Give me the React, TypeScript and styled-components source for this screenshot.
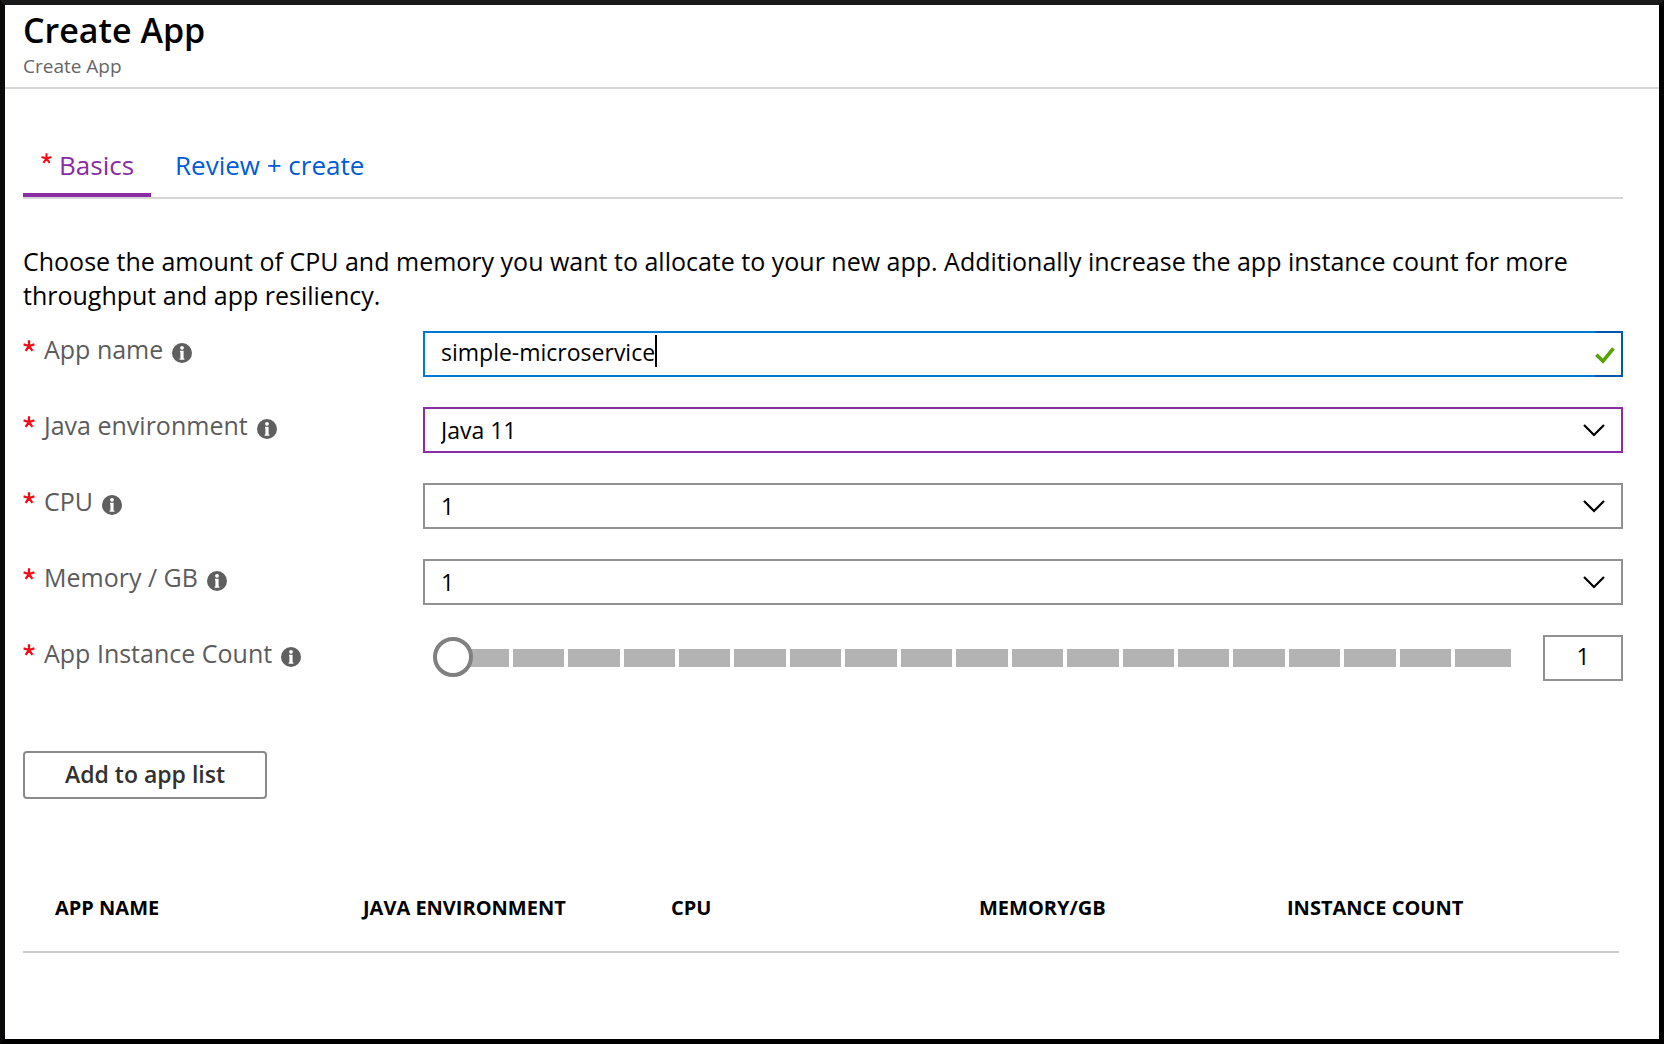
import React, { useState } from "react";
import styled, { createGlobalStyle } from "styled-components";

const GlobalStyle = createGlobalStyle`
  *, *::before, *::after { box-sizing: border-box; }
  body { margin: 0; background: #fff; }
  body, button, input, select { font-family: "Open Sans", "Noto Sans", sans-serif; }
`;

const Blade = styled.main`
  display: flex;
  flex-direction: column;
  min-height: 100vh;
  border: 5px solid #000;
  border-top-color: #1a1a1a;
  border-left-color: #0c0a09;
  background: #fff;
  color: #000;
`;

const Header = styled.header`
  padding: 5px 18px 8px;
  border-bottom: 2px solid #d6d6d6;
`;

const Title = styled.h1`
  margin: 0;
  font-size: 34px;
  line-height: 40px;
  font-weight: 600;
`;

const Subtitle = styled.p`
  margin: 3px 0 0;
  font-size: 19px;
  line-height: 26px;
  color: #666;
`;

const Body = styled.div`
  padding: 58px 36px 0 18px;
`;

const Tabs = styled.nav`
  display: flex;
  gap: 4px;
  border-bottom: 2px solid #d6d6d6;
`;

const Tab = styled.button<{ $active?: boolean }>`
  display: flex;
  gap: 7px;
  padding: 0 ${(p) => (p.$active ? 17 : 20)}px 10px ${(p) => (p.$active ? 18 : 20)}px;
  border: 0;
  border-bottom: 4px solid ${(p) => (p.$active ? "#8a2da5" : "transparent")};
  background: none;
  font-size: 26px;
  line-height: 36px;
  color: ${(p) => (p.$active ? "#8a2da5" : "#015cda")};
  cursor: pointer;
`;

const Star = styled.svg<{ $size: number; $top: number }>`
  flex: none;
  width: ${(p) => p.$size}px;
  height: ${(p) => p.$size}px;
  margin-top: ${(p) => p.$top}px;
  stroke: #f40c16;
  stroke-width: 2.3;
  fill: none;
`;

const Intro = styled.p`
  margin: 45px 0 19px;
  font-size: 25px;
  line-height: 34px;
`;

const Form = styled.form`
  display: flex;
  flex-direction: column;
  gap: 30px;
`;

const Row = styled.div`
  display: grid;
  grid-template-columns: 400px minmax(0, 1fr);
  align-items: start;
`;

const Label = styled.label`
  display: flex;
  gap: 9px;
  font-size: 25px;
  line-height: 36px;
  color: #5c5c5c;
`;

const InfoMark = styled.svg`
  flex: none;
  width: 20px;
  height: 20px;
  margin-top: 12px;
`;

const TextBox = styled.div`
  display: flex;
  align-items: stretch;
  height: 46px;
  border: 2px solid #0078d4;
  padding-left: 16px;
  cursor: text;
`;

const NameInput = styled.input`
  field-sizing: content;
  min-width: 0;
  border: 0;
  outline: 0;
  padding: 0 0 4px;
  background: none;
  font-size: 23px;
  color: #000;
`;

const Caret = styled.span`
  width: 2px;
  height: 32px;
  margin-top: 2px;
  background: #000;
`;

const Valid = styled.span`
  display: flex;
  align-items: center;
  width: 28px;
  margin: -2px -2px -2px auto;
  padding-top: 2px;
  border: 2px solid #0058ad;
  border-left: 0;
`;

const SelectBox = styled.div`
  display: grid;
  grid-template-columns: minmax(0, 1fr) 22px 18px;
  align-items: center;
`;

const Select = styled.select<{ $changed?: boolean }>`
  grid-area: 1 / 1 / 2 / 4;
  appearance: none;
  width: 100%;
  height: 46px;
  padding: 0 40px 0 16px;
  border: 2px solid ${(p) => (p.$changed ? "#8a2da5" : "#919191")};
  border-radius: 0;
  background: #fff;
  font-size: 23px;
  color: #000;
`;

const Chevron = styled.svg`
  grid-area: 1 / 2;
  width: 22px;
  height: 13px;
  pointer-events: none;
`;

const CountBox = styled.div`
  display: grid;
  grid-template-columns: minmax(0, 1fr) 80px;
  column-gap: 32px;
  align-items: center;
  padding-left: 10px;
`;

const Track = styled.div`
  grid-area: 1 / 1;
  display: flex;
  gap: 4px;
  padding-left: 20px;
`;

const Segment = styled.span`
  flex: 12;
  height: 18px;
  background: #b3b3b3;

  &:first-child, &:last-child { flex-grow: 13; }
`;

const Slider = styled.input`
  grid-area: 1 / 1;
  appearance: none;
  width: 100%;
  height: 40px;
  margin: 0 0 2px;
  background: none;
  z-index: 1;

  &::-webkit-slider-thumb {
    appearance: none;
    width: 40px;
    height: 40px;
    border: 4px solid #808080;
    border-radius: 50%;
    background: #fff;
  }
`;

const CountInput = styled.input`
  grid-area: 1 / 2;
  width: 80px;
  height: 46px;
  padding: 0 0 4px;
  border: 2px solid #919191;
  font-size: 23px;
  text-align: center;
  color: #000;
`;

const AddButton = styled.button`
  align-self: flex-start;
  height: 48px;
  margin-top: 40px;
  padding: 0 40px 2px;
  border: 2px solid #8a8a8a;
  border-radius: 4px;
  background: #fff;
  font-size: 23px;
  font-weight: 600;
  color: #323130;
  cursor: pointer;
`;

const TableWrap = styled.section`
  margin: 64px 4px 0 0;
  padding: 0 32px 0 24px;
  border-bottom: 2px solid #ccc;
`;

const Table = styled.table`
  width: 100%;
  table-layout: fixed;
  border-collapse: collapse;

  th {
    padding: 31px 8px 29px;
    font-size: 20px;
    line-height: 28px;
    font-weight: 700;
    text-align: left;
  }
`;

function RequiredStar({ size, top }: { size: number; top: number }) {
  return (
    <Star viewBox="0 0 12 12" $size={size} $top={top} aria-hidden="true">
      <path d="M6 0.3V6M6 6L0.6 4.4M6 6l5.4-1.6M6 6L2.6 10.8M6 6l3.4 4.8" />
    </Star>
  );
}

function Info() {
  return (
    <InfoMark viewBox="0 0 20 20" aria-hidden="true">
      <circle cx="10" cy="10" r="10" fill="#5f5f5f" />
      <circle cx="10" cy="4.8" r="1.9" fill="#fff" />
      <path d="M8 7.8H11.6V15.4H12.4V16.8H7.6V15.4H8.4V9.2H8z" fill="#fff" />
    </InfoMark>
  );
}

function FieldLabel({ id, text }: { id: string; text: string }) {
  return (
    <Label htmlFor={id}>
      <RequiredStar size={12} top={9} />
      {text}
      <Info />
    </Label>
  );
}

interface PickProps {
  id: string;
  label: string;
  options: string[];
  initial: string;
  changed?: boolean;
}

function Pick({ id, label, options, initial, changed }: PickProps) {
  return (
    <Row>
      <FieldLabel id={id} text={label} />
      <SelectBox>
        <Select id={id} defaultValue={initial} $changed={changed}>
          {options.map((o) => (
            <option key={o}>{o}</option>
          ))}
        </Select>
        <Chevron viewBox="0 0 22 13" aria-hidden="true">
          <path d="M1 1l10 10L21 1" fill="none" stroke="#000" strokeWidth="2.2" />
        </Chevron>
      </SelectBox>
    </Row>
  );
}

const MAX_INSTANCES = 20;
const COLUMNS = ["APP NAME", "JAVA ENVIRONMENT", "CPU", "MEMORY/GB", "INSTANCE COUNT"];

export default function App() {
  const [name, setName] = useState("simple-microservice");
  const [count, setCount] = useState(1);

  return (
    <>
      <GlobalStyle />
      <Blade>
        <Header>
          <Title>Create App</Title>
          <Subtitle>Create App</Subtitle>
        </Header>
        <Body>
          <Tabs>
            <Tab type="button" $active>
              <RequiredStar size={11} top={6} />
              Basics
            </Tab>
            <Tab type="button">Review + create</Tab>
          </Tabs>
          <Intro>
            Choose the amount of CPU and memory you want to allocate to your new app. Additionally
            increase the app instance count for more throughput and app resiliency.
          </Intro>
          <Form onSubmit={(e) => e.preventDefault()}>
            <Row>
              <FieldLabel id="name" text="App name" />
              <TextBox>
                <NameInput id="name" value={name} onChange={(e) => setName(e.target.value)} />
                <Caret />
                <Valid>
                  <svg width="20" height="17" viewBox="0 0 20 17" aria-hidden="true">
                    <path d="M1.3 7.8L8 14.2L18.4 1.4" fill="none" stroke="#57a300" strokeWidth="3.6" />
                  </svg>
                </Valid>
              </TextBox>
            </Row>
            <Pick id="java" label="Java environment" options={["Java 8", "Java 11"]} initial="Java 11" changed />
            <Pick id="cpu" label="CPU" options={["1", "2", "3", "4"]} initial="1" />
            <Pick id="memory" label="Memory / GB" options={["1", "2", "4", "8"]} initial="1" />
            <Row>
              <FieldLabel id="count" text="App Instance Count" />
              <CountBox>
                <Track>
                  {Array.from({ length: MAX_INSTANCES - 1 }, (_, i) => (
                    <Segment key={i} />
                  ))}
                </Track>
                <Slider
                  id="count"
                  type="range"
                  min={1}
                  max={MAX_INSTANCES}
                  value={count}
                  onChange={(e) => setCount(Number(e.target.value))}
                />
                <CountInput
                  aria-label="App Instance Count value"
                  inputMode="numeric"
                  value={count}
                  onChange={(e) => setCount(Number(e.target.value) || 1)}
                />
              </CountBox>
            </Row>
            <AddButton type="submit">Add to app list</AddButton>
          </Form>
          <TableWrap>
            <Table>
              <thead>
                <tr>
                  {COLUMNS.map((c) => (
                    <th key={c} scope="col">{c}</th>
                  ))}
                </tr>
              </thead>
            </Table>
          </TableWrap>
        </Body>
      </Blade>
    </>
  );
}
